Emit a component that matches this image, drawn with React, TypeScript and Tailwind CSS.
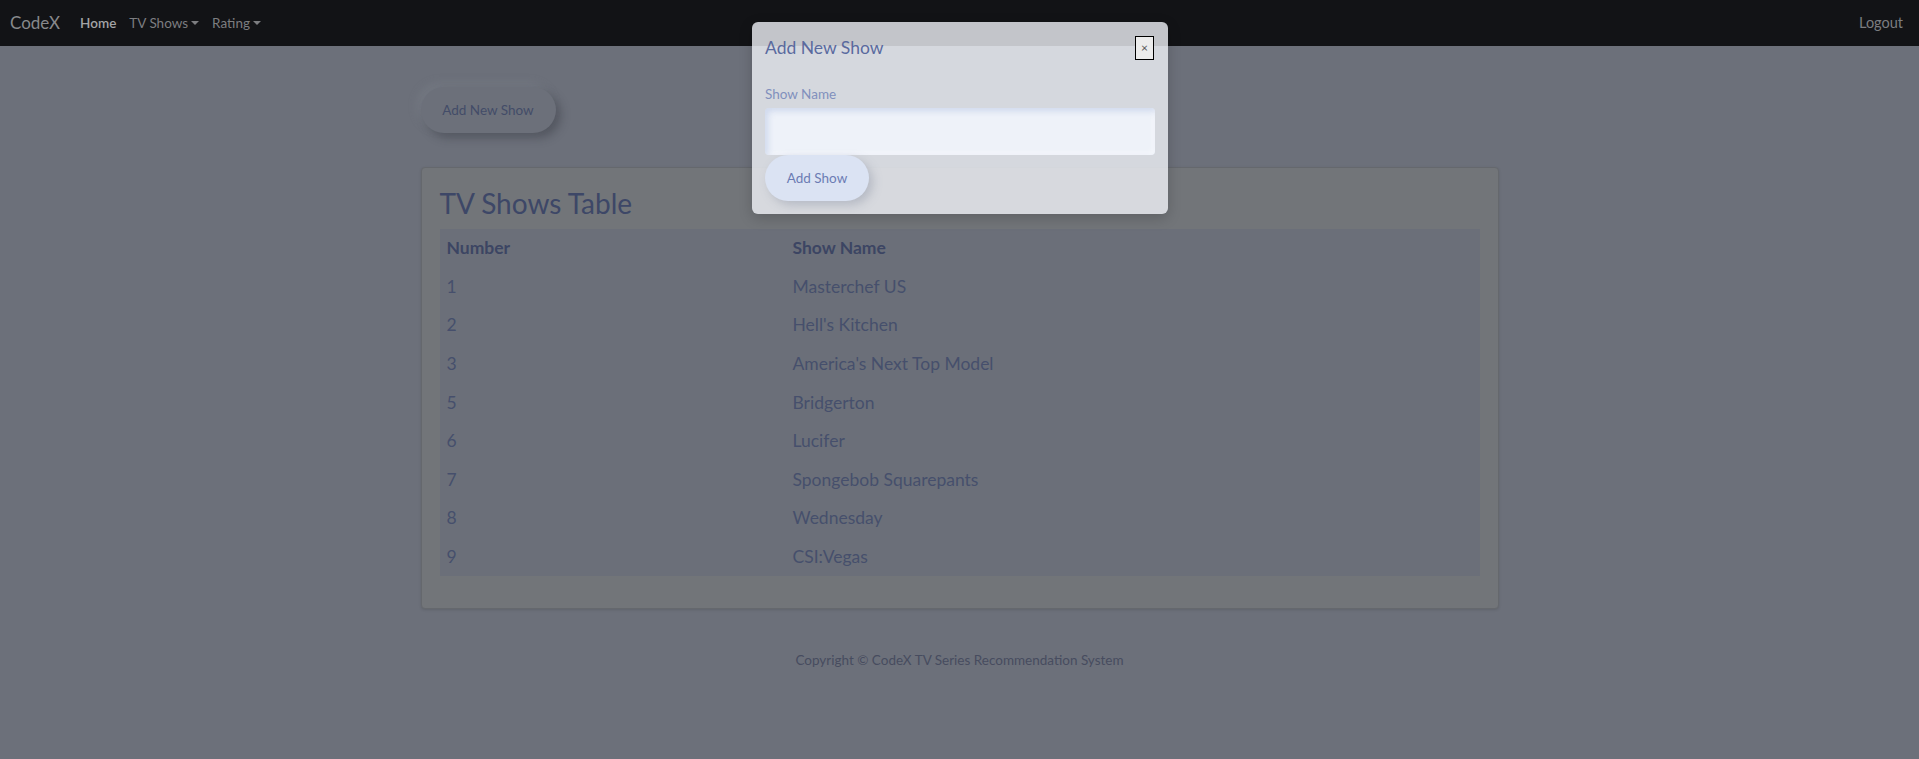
import React from "react";

const SHOWS: { id: number; name: string }[] = [
  { id: 1, name: "Masterchef US" },
  { id: 2, name: "Hell's Kitchen" },
  { id: 3, name: "America's Next Top Model" },
  { id: 5, name: "Bridgerton" },
  { id: 6, name: "Lucifer" },
  { id: 7, name: "Spongebob Squarepants" },
  { id: 8, name: "Wednesday" },
  { id: 9, name: "CSI:Vegas" },
];

function Caret() {
  return (
    <span className="ml-[3px] inline-block h-0 w-0 border-x-[4px] border-t-[4px] border-x-transparent border-t-current align-middle" />
  );
}

function Navbar() {
  return (
    <nav className="flex h-[46px] items-center bg-[#121316] pl-[10px] pr-[16px]">
      <span className="text-[17px] text-[#88898c]">CodeX</span>
      <div className="ml-[20px] flex items-center gap-[13px] text-[13.5px]">
        <span className="font-semibold text-[#a3a4a6]">Home</span>
        <span className="flex items-center text-[#7c7d80]">
          TV Shows
          <Caret />
        </span>
        <span className="flex items-center text-[#7c7d80]">
          Rating
          <Caret />
        </span>
      </div>
      <span className="ml-auto text-[14.5px] text-[#7c7d80]">Logout</span>
    </nav>
  );
}

function AddShowModal() {
  return (
    <div className="absolute left-[752px] top-[22px] w-[416px] rounded-[6px] bg-[rgba(240,243,248,0.8)] px-[13px] pb-[13px] pt-[12px] shadow-[0_4px_14px_rgba(0,0,0,0.18)]">
      <div className="flex items-start justify-between">
        <h5 className="mt-[2px] text-[17.5px] leading-[24px] text-[#5a6a9e]">
          Add New Show
        </h5>
        <button className="mt-[2px] mr-[1px] flex h-[24px] w-[19px] items-center justify-center border-[1.5px] border-black bg-[#ececec] text-[12px] leading-none text-[#555]">
          ×
        </button>
      </div>
      <label className="mt-[24px] block text-[13.5px] leading-[20px] text-[#8190bd]">
        Show Name
      </label>
      <input
        type="text"
        className="mt-[4px] block h-[47px] w-full rounded-[4px] bg-[#eef2f9] px-3 shadow-[inset_3px_3px_6px_rgba(150,170,215,0.35),inset_-2px_-2px_5px_rgba(255,255,255,0.6)] outline-none"
      />
      <button className="block h-[46px] w-[104px] rounded-full bg-[#dbe3f3] text-[13.5px] text-[#6c7cb3] shadow-[4px_4px_10px_rgba(120,130,150,0.35)]">
        Add Show
      </button>
    </div>
  );
}

export default function App() {
  return (
    <div
      className="relative min-h-[759px] bg-[#6c707a]"
      style={{ fontFamily: "Lato, 'Noto Sans', sans-serif" }}
    >
      <Navbar />

      <main className="mx-auto w-[1078px] pt-[41px]">
        <button className="h-[46px] w-[135px] rounded-full bg-[#6c707a] text-[13.5px] text-[#434c68] shadow-[5px_5px_10px_rgba(40,44,52,0.35),-4px_-4px_8px_rgba(130,134,142,0.35)]">
          Add New Show
        </button>

        <div className="mt-[34px] rounded-[4px] border border-[#65686d] bg-[#727579] px-[18px] pb-[32px] pt-[18px] shadow-[0_1px_3px_rgba(0,0,0,0.12)]">
          <h2 className="text-[28px] leading-[34px] text-[#3d4767]">
            TV Shows Table
          </h2>
          <div className="mt-[9px] bg-[#6b6f79]">
            <div className="grid h-[38.6px] grid-cols-[346px_1fr] items-center px-[7px] text-[17.5px] font-bold text-[#3c4563]">
              <span>Number</span>
              <span>Show Name</span>
            </div>
            {SHOWS.map((show) => (
              <div
                key={show.id}
                className="grid h-[38.6px] grid-cols-[346px_1fr] items-center px-[7px] text-[17.5px] text-[#464f6c]"
              >
                <span>{show.id}</span>
                <span>{show.name}</span>
              </div>
            ))}
          </div>
        </div>

        <p className="mt-[41px] text-center text-[13.5px] text-[#474c5f]">
          Copyright © CodeX TV Series Recommendation System
        </p>
      </main>

      <AddShowModal />
    </div>
  );
}
